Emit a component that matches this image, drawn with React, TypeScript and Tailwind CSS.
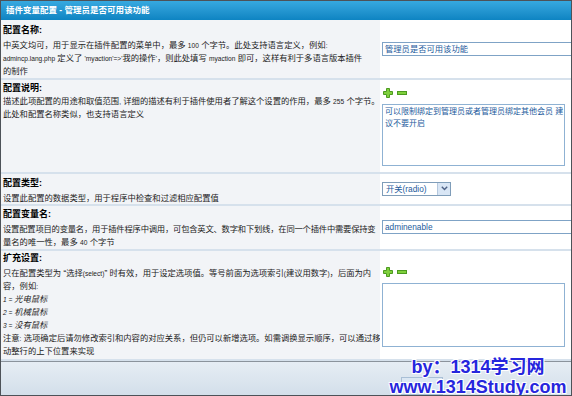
const font = "font-['Liberation_Sans','Noto_Sans_CJK_SC',sans-serif]";

// latin runs are set smaller than the CJK text, as in the old page
function L({ children }: { children: React.ReactNode }) {
  return <span className="text-[6.6px]">{children}</span>;
}

function PlusMinus() {
  return (
    <div className="flex items-center gap-[4px]">
      <svg width="10" height="10" viewBox="0 0 10 10">
        <path d="M3.5 0.5h3v3h3v3h-3v3h-3v-3h-3v-3h3z" fill="#7fd03c" stroke="#4c9a20" strokeWidth="1" />
      </svg>
      <svg width="10" height="10" viewBox="0 0 10 10">
        <rect x="0.5" y="3.5" width="9" height="3" fill="#7fd03c" stroke="#4c9a20" strokeWidth="1" />
      </svg>
    </div>
  );
}

function Row({
  h,
  pt,
  label,
  mt,
  children,
  right,
  top,
}: {
  h: string;
  pt: string;
  label: string;
  mt: string;
  children: React.ReactNode;
  right: React.ReactNode;
  top?: boolean;
}) {
  return (
    <div className={`flex border-b-2 border-[#d6e1ec] ${h}`}>
      <div className={`w-[379px] shrink-0 overflow-hidden bg-[#f2f4f7] pl-[2px] ${pt}`}>
        <div className="text-[9px] font-bold leading-[14px] text-black">{label}</div>
        <div className={`whitespace-nowrap text-[8.3px] leading-[13px] text-[#222] ${mt}`}>{children}</div>
      </div>
      <div className={`flex flex-1 overflow-hidden bg-white pl-[2px] ${top ? "flex-col" : "items-center"}`}>
        {right}
      </div>
    </div>
  );
}

export default function App() {
  return (
    <div className={`relative flex h-[396px] w-[572px] flex-col overflow-hidden border border-[#4d5258] bg-white ${font}`}>
      <div className="flex h-[19px] shrink-0 items-center bg-gradient-to-b from-[#36a9e0] to-[#0d84c2] pl-[5px] text-[8.5px] font-bold text-white">
        插件变量配置 - 管理员是否可用该功能
      </div>

      <Row
        h="h-[60px]"
        pt="pt-[3px]"
        mt="mt-[2px]"
        label="配置名称:"
        right={
          <div className="h-[14px] w-[200px] shrink-0 border border-[#7fa3c6] pl-[2px] text-[8.3px] leading-[12px] text-[#1d5b9c]">
            管理员是否可用该功能
          </div>
        }
      >
        中英文均可，用于显示在插件配置的菜单中，最多 <L>100</L> 个字节。此处支持语言定义，例如<L>:</L>
        <br />
        <L>admincp.lang.php</L> 定义了 <L>'myaction'=&gt;'</L>我的操作<L>'</L>，则此处填写 <L>myaction</L> 即可，这样有利于多语言版本插件
        <br />
        的制作
      </Row>

      <Row
        h="h-[94px]"
        pt="pt-[1px]"
        mt="mt-0"
        label="配置说明:"
        top
        right={
          <>
            <div className="mt-[8px] pl-[1px]">
              <PlusMinus />
            </div>
            <div className="mt-[6px] h-[62px] w-[183px] whitespace-nowrap border border-[#8fb2d3] px-[2px] pt-[1px] text-[8px] leading-[12px] text-[#1d5b9c]">
              可以限制绑定到管理员或者管理员绑定其他会员 建
              <br />
              议不要开启
            </div>
          </>
        }
      >
        描述此项配置的用途和取值范围<L>,</L> 详细的描述有利于插件使用者了解这个设置的作用，最多 <L>255</L> 个字节。
        <br />
        此处和配置名称类似，也支持语言定义
      </Row>

      <Row
        h="h-[32px]"
        pt="pt-[2px]"
        mt="mt-[2px]"
        label="配置类型:"
        right={
          <div className="flex h-[14px] w-[69px] items-stretch border border-[#7f9db9] bg-white">
            <div className="flex-1 pl-[3px] text-[8.3px] leading-[12px] text-[#1d5b9c]">开关(radio)</div>
            <div className="flex w-[13px] items-center justify-center border-l border-[#b5c8de] bg-[#d9e6f5]">
              <svg width="7" height="5" viewBox="0 0 7 5">
                <path d="M0.8 0.8 L3.5 3.6 L6.2 0.8" fill="none" stroke="#4d6185" strokeWidth="1.4" />
              </svg>
            </div>
          </div>
        }
      >
        设置此配置的数据类型，用于程序中检查和过滤相应配置值
      </Row>

      <Row
        h="h-[45px]"
        pt="pt-[1px]"
        mt="mt-[2px]"
        label="配置变量名:"
        right={
          <div className="h-[14px] w-[200px] shrink-0 border border-[#7fa3c6] pl-[2px] text-[8.3px] leading-[12px] text-[#1d5b9c]">
            adminenable
          </div>
        }
      >
        <span className="tracking-[-0.2px]">设置配置项目的变量名，用于插件程序中调用，可包含英文、数字和下划线，在同一个插件中需要保持变</span>
        <br />
        量名的唯一性，最多 <L>40</L> 个字节
      </Row>

      <Row
        h="h-[111px]"
        pt="pt-0"
        mt="mt-[2px]"
        label="扩充设置:"
        top
        right={
          <>
            <div className="mt-[16px] pl-[1px]">
              <PlusMinus />
            </div>
            <div className="mt-[6px] h-[64px] w-[183px] border border-[#8fb2d3]" />
          </>
        }
      >
        只在配置类型为 “选择<L>(select)</L>” 时有效，用于设定选项值。等号前面为选项索引<L>(</L>建议用数字<L>)</L>，后面为内
        <br />
        容，例如<L>:</L>
        <br />
        <i>
          <L>1 = </L>光电鼠标
        </i>
        <br />
        <i>
          <L>2 = </L>机械鼠标
        </i>
        <br />
        <i>
          <L>3 = </L>没有鼠标
        </i>
        <br />
        注意<L>:</L> 选项确定后请勿修改索引和内容的对应关系，但仍可以新增选项。如需调换显示顺序，可以通过移
        <br />
        动整行的上下位置来实现
      </Row>

      <div className="flex-1 border-t border-[#8b939c] bg-gradient-to-b from-[#e6edf4] to-[#d3dfea] pl-[400px] pt-[15px]">
        <div className="h-[18px] w-[42px] border border-[#a9bfd6] bg-[#dbe7f3]" />
      </div>

      <div className="absolute left-[384px] top-[356px] w-[186px] text-center text-[18px] font-bold leading-[20px] text-[#2626dd] [text-shadow:1px_1px_0_#fff,-1px_-1px_0_#fff,1px_-1px_0_#fff,-1px_1px_0_#fff]">
        <div>by：1314学习网</div>
        <div>www.1314Study.com</div>
      </div>
    </div>
  );
}
